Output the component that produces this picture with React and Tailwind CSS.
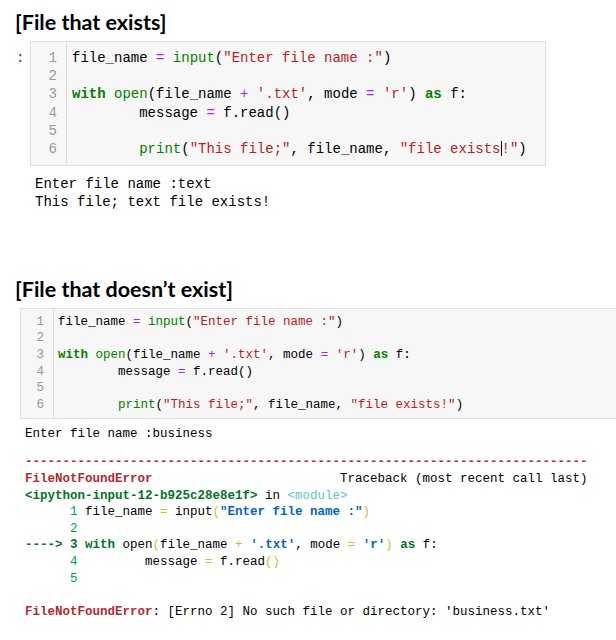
import React from "react";

// token classes for the notebook editor
const kw = "font-bold text-[#008000]";
const bi = "text-[#008000]";
const st = "text-[#ba2121]";
const op = "text-[#aa22ff]";

const codeLines = (cursor) => [
  [["", "file_name "], [op, "="], ["", " "], [bi, "input"], ["", "("], [st, '"Enter file name :"'], ["", ")"]],
  [],
  [[kw, "with"], ["", " "], [bi, "open"], ["", "(file_name "], [op, "+"], ["", " "], [st, "'.txt'"], ["", ", mode "], [op, "="], ["", " "], [st, "'r'"], ["", ") "], [kw, "as"], ["", " f:"]],
  [["", "        message "], [op, "="], ["", " f.read()"]],
  [],
  [["", "        "], [bi, "print"], ["", "("], [st, '"This file;"'], ["", ", file_name, "], [st, '"file exists'], [cursor ? "cursor" : "", ""], [st, '!"'], ["", ")"]],
];

// traceback (ansi) colours
const red = "font-bold text-[#b22b31]";
const gI = "font-bold text-[#007427]";
const gr = "text-[#00a250]";
const cy = "text-[#60c6c8]";
const bl = "font-bold text-[#0065ca]";
const ye = "text-[#ddb62b]";

const traceLines = [
  [[red, "-".repeat(75)]],
  [[red, "FileNotFoundError"], ["", " ".repeat(25) + "Traceback (most recent call last)"]],
  [[gI, "<ipython-input-12-b925c28e8e1f>"], ["", " in "], [cy, "<module>"]],
  [[gr, "      1"], ["", " file_name "], [ye, "="], ["", " input"], [ye, "("], [bl, '"Enter file name :"'], [ye, ")"]],
  [[gr, "      2"]],
  [[gI, "----> 3"], ["", " "], [gI, "with"], ["", " open"], [ye, "("], ["", "file_name "], [ye, "+"], ["", " "], [bl, "'.txt'"], ["", ", mode "], [ye, "="], ["", " "], [bl, "'r'"], [ye, ")"], ["", " "], [gI, "as"], ["", " f:"]],
  [[gr, "      4"], ["", "         message "], [ye, "="], ["", " f"], ["", ".read"], [ye, "()"]],
  [[gr, "      5"]],
  [],
  [[red, "FileNotFoundError"], ["", ": [Errno 2] No such file or directory: 'business.txt'"]],
];

function Tokens({ tokens }) {
  if (!tokens.length) return <div>&nbsp;</div>;
  return (
    <div className="whitespace-pre">
      {tokens.map(([cls, text], i) =>
        cls === "cursor" ? (
          <span key={i} className="inline-block w-px h-[1.1em] bg-black align-middle -mt-[2px]" />
        ) : (
          <span key={i} className={cls}>{text}</span>
        )
      )}
    </div>
  );
}

function CodeCell({ big }) {
  const lines = codeLines(big);
  return (
    <div
      className={
        "flex border border-[#e0e0e0] bg-[#f7f7f7] " +
        (big ? "w-[516px] text-[14px] leading-[18.2px]" : "w-[620px] text-[12.5px] leading-[16.6px]")
      }
    >
      <div
        className={
          "text-right text-[#999] border-r border-[#ddd] " +
          (big ? "w-[36px] pr-[9px] py-[7px]" : "w-[33px] pr-[9px] py-[4.5px]")
        }
      >
        {lines.map((_, i) => (
          <div key={i}>{i + 1}</div>
        ))}
      </div>
      <div className={"text-black " + (big ? "pl-[5px] py-[7px]" : "pl-[4px] py-[4.5px]")}>
        {lines.map((t, i) => (
          <Tokens key={i} tokens={t} />
        ))}
      </div>
    </div>
  );
}

export default function App() {
  const mono = { fontFamily: "'Liberation Mono', 'DejaVu Sans Mono', monospace" };
  return (
    <div className="w-[616px] h-[640px] bg-white overflow-hidden" style={mono}>
      {/* File that exists */}
      <h2 className="pl-[15px] pt-[8px] h-[41px] text-[21.5px] leading-[28px] font-bold text-black font-['Lato',sans-serif]">
        [File that exists]
      </h2>
      <div className="flex">
        <div className="w-[30px] pl-[16px] pt-[8px] text-[14px] leading-[18px] text-[#303f9f]">:</div>
        <CodeCell big />
      </div>
      <div className="pl-[35px] pt-[9px] text-[14px] leading-[18px] text-black whitespace-pre">
        <div>Enter file name :text</div>
        <div>This file; text file exists!</div>
      </div>

      {/* File that doesn't exist */}
      <h2 className="pl-[15px] mt-[64px] h-[33px] text-[21.5px] leading-[28px] font-bold text-black font-['Lato',sans-serif]">
        [File that doesn’t exist]
      </h2>
      <div className="pl-[20px]">
        <CodeCell />
      </div>
      <div className="pl-[25px] pt-[7px] text-[12.5px] leading-[16.6px] text-black whitespace-pre">
        <div>Enter file name :business</div>
        <div className="mt-[12px]">
          {traceLines.map((t, i) => (
            <Tokens key={i} tokens={t} />
          ))}
        </div>
      </div>
    </div>
  );
}
